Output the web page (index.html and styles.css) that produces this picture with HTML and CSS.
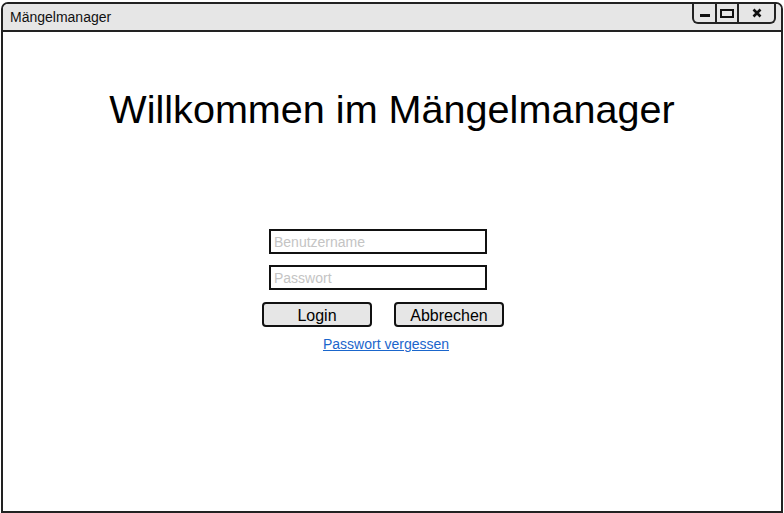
FILE: index.html
```html
<!DOCTYPE html>
<html lang="de">
<head>
<meta charset="utf-8">
<title>Mängelmanager</title>
<link rel="stylesheet" href="styles.css">
</head>
<body>
<div class="window">
  <div class="titlebar">
    <span class="title">Mängelmanager</span>
    <div class="controls">
      <span class="ctl ctl-min"><span class="min-bar"></span></span>
      <span class="ctl ctl-max"><span class="max-box"></span></span>
      <span class="ctl ctl-close">
        <svg width="10" height="10" viewBox="0 0 10 10"><path d="M1.5 1.5 L8.5 8.5 M8.5 1.5 L1.5 8.5" stroke="#111" stroke-width="2.6" stroke-linecap="butt"/></svg>
      </span>
    </div>
  </div>
  <div class="content">
    <h1 class="heading">Willkommen im Mängelmanager</h1>
    <form class="login">
      <input class="field" type="text" placeholder="Benutzername">
      <input class="field" type="password" placeholder="Passwort">
      <div class="buttons">
        <button type="button" class="btn">Login</button>
        <button type="button" class="btn">Abbrechen</button>
      </div>
      <a class="forgot" href="#">Passwort vergessen</a>
    </form>
  </div>
</div>
</body>
</html>
```
FILE: styles.css
```css
html, body {
  margin: 0;
  padding: 0;
  background: #fff;
}
body {
  font-family: "Liberation Sans", Arial, sans-serif;
  padding: 2px 1px 0 1px;
  height: 513px;
  box-sizing: border-box;
}
.window {
  box-sizing: border-box;
  height: 511px;
  border: 2px solid #222;
  border-radius: 7px 7px 0 0;
  display: flex;
  flex-direction: column;
  overflow: hidden;
}
.titlebar {
  height: 26px;
  background: #e6e6e6;
  border-bottom: 2px solid #222;
  display: flex;
  align-items: flex-start;
  justify-content: space-between;
  flex-shrink: 0;
}
.title {
  font-size: 14px;
  color: #111;
  margin-left: 7px;
  line-height: 26px;
}
.controls {
  display: flex;
  height: 18px;
  margin-right: 5px;
  border: 2px solid #222;
  border-top: none;
  border-radius: 0 0 6px 6px;
  background: #e6e6e6;
}
.ctl {
  display: flex;
  align-items: center;
  justify-content: center;
  height: 18px;
}
.ctl-min {
  width: 21px;
  border-right: 2px solid #222;
}
.min-bar {
  width: 10px;
  height: 3px;
  background: #111;
  margin-top: 5px;
}
.ctl-max {
  width: 20px;
  border-right: 2px solid #222;
}
.max-box {
  width: 10px;
  height: 5px;
  border: 2px solid #111;
}
.ctl-close {
  width: 35px;
}
.content {
  flex: 1;
  display: flex;
  flex-direction: column;
  align-items: stretch;
}
.heading {
  align-self: center;
  font-weight: normal;
  font-size: 39.6px;
  color: #000;
  margin: 54px 0 0 0;
  line-height: 46px;
}
.login {
  margin: 97px 0 0 259px;
  width: 242px;
  display: flex;
  flex-direction: column;
  align-items: flex-start;
}
.field {
  box-sizing: border-box;
  width: 218px;
  height: 25px;
  border: 2px solid #111;
  font-family: "Liberation Sans", Arial, sans-serif;
  font-size: 14px;
  padding: 0 3px;
  margin: 0 0 11px 7px;
  outline: none;
}
.field::placeholder {
  color: #c4c4c4;
}
.buttons {
  display: flex;
  gap: 22px;
  margin-top: 1px;
}
.btn {
  box-sizing: border-box;
  width: 110px;
  height: 25px;
  border: 2px solid #111;
  border-radius: 4px;
  background: #e6e6e6;
  font-family: "Liberation Sans", Arial, sans-serif;
  font-size: 16px;
  color: #000;
  padding: 1px 0 0 0;
  line-height: 21px;
}
.forgot {
  align-self: center;
  margin-top: 9px;
  margin-left: 6px;
  font-size: 14px;
  color: #1a66cc;
  text-decoration: underline;
}
```
